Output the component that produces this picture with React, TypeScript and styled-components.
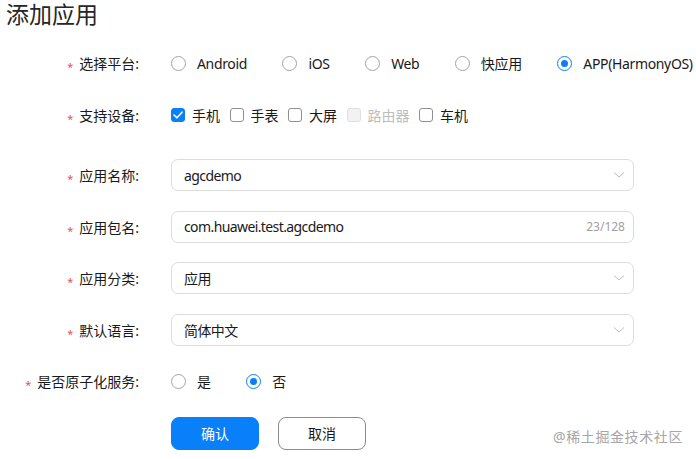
import styled, { createGlobalStyle } from "styled-components";

const GlobalStyle = createGlobalStyle`
  html, body {
    margin: 0;
    padding: 0;
    background: #ffffff;
  }
  body {
    font-family: "Noto Sans", "Noto Sans CJK SC", sans-serif;
    color: #191919;
  }
`;

const blue = "#0a7ffa";

const Page = styled.div`
  position: relative;
  box-sizing: border-box;
  width: 696px;
  height: 459px;
  overflow: hidden;
  background: #ffffff;
`;

const Title = styled.h1`
  margin: 0;
  padding: 0 0 0 6px;
  font-size: 23px;
  font-weight: 400;
  line-height: 29px;
  color: #262626;
`;

const Form = styled.div`
  display: flex;
  flex-direction: column;
  gap: 19.5px;
  margin-top: 18px;
`;

const Row = styled.div<{ $extra?: number }>`
  display: grid;
  grid-template-columns: 139px 1fr;
  column-gap: 32px;
  align-items: center;
  min-height: 32px;
  margin-bottom: ${(p) => p.$extra ?? 0}px;
`;

const Label = styled.div`
  text-align: right;
  font-size: 14px;
  white-space: nowrap;
  color: #191919;
`;

const Star = styled.span`
  display: inline-block;
  color: #e84d5b;
  font-size: 11px;
  margin-right: 6px;
  transform: translateY(2px);
`;

const Options = styled.div`
  display: flex;
  flex-wrap: nowrap;
  align-items: center;
  white-space: nowrap;
`;

const RadioItem = styled.label`
  display: inline-flex;
  flex-shrink: 0;
  align-items: center;
  gap: 11px;
  margin-right: 35.5px;
  font-size: 14px;
  letter-spacing: -0.35px;
  color: #191919;
`;

const RadioCircle = styled.span<{ $on?: boolean }>`
  width: 15px;
  height: 15px;
  flex-shrink: 0;
  box-sizing: border-box;
  border-radius: 50%;
  border: ${(p) => (p.$on ? `1.5px solid ${blue}` : "1px solid #a3a3a3")};
  display: inline-flex;
  align-items: center;
  justify-content: center;
  background: #fff;

  &::after {
    content: "";
    display: ${(p) => (p.$on ? "block" : "none")};
    width: 7px;
    height: 7px;
    border-radius: 50%;
    background: ${blue};
  }
`;

const CheckItem = styled.label<{ $disabled?: boolean }>`
  display: inline-flex;
  flex-shrink: 0;
  align-items: center;
  gap: 7px;
  margin-right: 9.5px;
  font-size: 14px;
  color: ${(p) => (p.$disabled ? "#bdbdbd" : "#191919")};
`;

const CheckBox = styled.span<{ $on?: boolean; $disabled?: boolean }>`
  width: 14px;
  height: 14px;
  flex-shrink: 0;
  box-sizing: border-box;
  border-radius: 3px;
  border: 1px solid
    ${(p) => (p.$on ? blue : p.$disabled ? "#dedede" : "#8f8f8f")};
  background: ${(p) => (p.$on ? blue : p.$disabled ? "#f2f2f2" : "#fff")};
  display: inline-flex;
  align-items: center;
  justify-content: center;
`;

const Field = styled.div`
  width: 463px;
  height: 32px;
  box-sizing: border-box;
  border: 1px solid #dcdcdc;
  border-radius: 7px;
  padding: 0 8px 0 12px;
  display: flex;
  align-items: center;
  justify-content: space-between;
  font-size: 14px;
  letter-spacing: -0.6px;
  color: #191919;
`;

const Counter = styled.span`
  font-size: 12px;
  letter-spacing: 0;
  color: #a0a0a0;
`;

const Buttons = styled.div`
  display: flex;
  gap: 19px;
`;

const Button = styled.button<{ $primary?: boolean }>`
  width: 88px;
  height: 33px;
  box-sizing: border-box;
  border-radius: 8px;
  border: 1px solid ${(p) => (p.$primary ? blue : "#8a8a8a")};
  background: ${(p) => (p.$primary ? blue : "#fff")};
  color: ${(p) => (p.$primary ? "#fff" : "#191919")};
  font-family: inherit;
  font-size: 14px;
  padding: 0;
`;

const Watermark = styled.div`
  position: absolute;
  right: 13px;
  top: 426px;
  font-size: 14px;
  letter-spacing: 0.6px;
  color: #a6a6a6;
`;

function Chevron() {
  return (
    <svg width="12" height="8" viewBox="0 0 12 8">
      <polyline
        points="1,1.5 6,6 11,1.5"
        fill="none"
        stroke="#bdbdbd"
        strokeWidth="1"
      />
    </svg>
  );
}

function Check() {
  return (
    <svg width="10" height="8" viewBox="0 0 10 8">
      <polyline
        points="1,4 4,6.8 9,1.2"
        fill="none"
        stroke="#fff"
        strokeWidth="1.6"
        strokeLinecap="round"
        strokeLinejoin="round"
      />
    </svg>
  );
}

const platforms = ["Android", "iOS", "Web", "快应用", "APP(HarmonyOS)"];
const devices = [
  { name: "手机", on: true },
  { name: "手表" },
  { name: "大屏" },
  { name: "路由器", disabled: true },
  { name: "车机" },
];

function Req({ text }: { text: string }) {
  return (
    <Label>
      <Star>*</Star>
      {text}:
    </Label>
  );
}

export default function App() {
  return (
    <Page>
      <GlobalStyle />
      <Title>添加应用</Title>
      <Form>
        <Row>
          <Req text="选择平台" />
          <Options>
            {platforms.map((p, i) => (
              <RadioItem key={p}>
                <RadioCircle $on={i === platforms.length - 1} />
                {p}
              </RadioItem>
            ))}
          </Options>
        </Row>
        <Row $extra={9}>
          <Req text="支持设备" />
          <Options>
            {devices.map((d) => (
              <CheckItem key={d.name} $disabled={d.disabled}>
                <CheckBox $on={d.on} $disabled={d.disabled}>
                  {d.on && <Check />}
                </CheckBox>
                {d.name}
              </CheckItem>
            ))}
          </Options>
        </Row>
        <Row>
          <Req text="应用名称" />
          <Field>
            agcdemo
            <Chevron />
          </Field>
        </Row>
        <Row>
          <Req text="应用包名" />
          <Field>
            com.huawei.test.agcdemo
            <Counter>23/128</Counter>
          </Field>
        </Row>
        <Row>
          <Req text="应用分类" />
          <Field>
            应用
            <Chevron />
          </Field>
        </Row>
        <Row>
          <Req text="默认语言" />
          <Field>
            简体中文
            <Chevron />
          </Field>
        </Row>
        <Row>
          <Req text="是否原子化服务" />
          <Options>
            <RadioItem>
              <RadioCircle />是
            </RadioItem>
            <RadioItem>
              <RadioCircle $on />否
            </RadioItem>
          </Options>
        </Row>
        <Row>
          <span />
          <Buttons>
            <Button $primary>确认</Button>
            <Button>取消</Button>
          </Buttons>
        </Row>
      </Form>
      <Watermark>@稀土掘金技术社区</Watermark>
    </Page>
  );
}
